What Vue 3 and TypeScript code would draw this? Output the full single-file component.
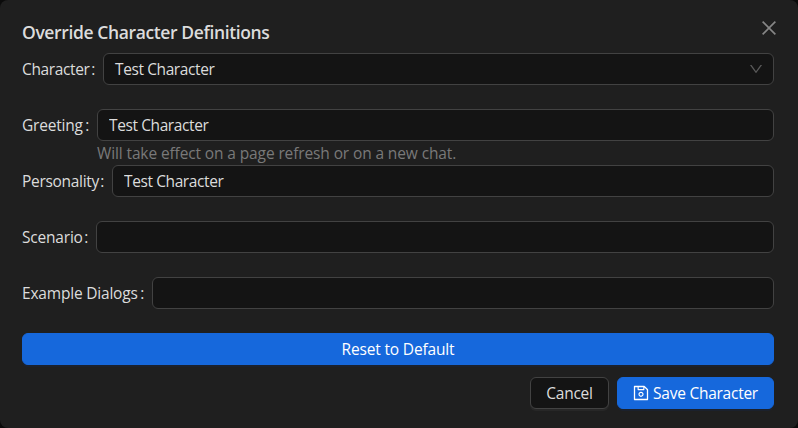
<script setup lang="ts">
import { reactive } from 'vue'

interface Field {
  key: string
  label: string
  value: string
  kind: 'select' | 'input'
  hint?: string
}

const fields = reactive<Field[]>([
  { key: 'character', label: 'Character', value: 'Test Character', kind: 'select' },
  { key: 'greeting', label: 'Greeting', value: 'Test Character', kind: 'input', hint: 'Will take effect on a page refresh or on a new chat.' },
  { key: 'personality', label: 'Personality', value: 'Test Character', kind: 'input' },
  { key: 'scenario', label: 'Scenario', value: '', kind: 'input' },
  { key: 'dialogs', label: 'Example Dialogs', value: '', kind: 'input' },
])

function reset() {
  for (const field of fields) {
    if (field.kind === 'input') field.value = ''
  }
}
</script>

<template>
  <div class="modal" role="dialog">
    <header class="header">
      <h1 class="title">Override Character Definitions</h1>
      <button class="close" type="button" aria-label="Close">
        <svg viewBox="64 64 896 896" width="18" height="18" fill="currentColor">
          <path d="M799.9 166.3 857.7 224.1 569.9 512 857.7 799.9 799.9 857.7 512 569.9 224.1 857.7 166.3 799.9 454.1 512 166.3 224.1 224.1 166.3 512 454.1z" />
        </svg>
      </button>
    </header>

    <form class="form" @submit.prevent>
      <div v-for="field in fields" :key="field.key" class="row" :class="field.key">
        <label class="label"><span class="name">{{ field.label }}</span><span class="colon">:</span></label>
        <div class="control">
          <div v-if="field.kind === 'select'" class="box">
            <span class="value">{{ field.value }}</span>
            <svg class="arrow" viewBox="64 64 896 896" width="14" height="14" fill="currentColor">
              <path d="M884 256h-75c-5.1 0-9.9 2.5-12.9 6.6L512 654.2 227.9 262.6c-3-4.1-7.8-6.6-12.9-6.6h-75c-6.5 0-10.3 7.4-6.5 12.7l352.6 486.1c12.8 17.6 39 17.6 51.7 0l352.6-486.1c3.9-5.3.1-12.7-6.4-12.7z" />
            </svg>
          </div>
          <input v-else v-model="field.value" class="box value" type="text" />
          <div v-if="field.hint" class="hint">{{ field.hint }}</div>
        </div>
      </div>
      <button class="btn primary reset" type="button" @click="reset"><span>Reset to Default</span></button>
    </form>

    <footer class="footer">
      <button class="btn cancel" type="button"><span>Cancel</span></button>
      <button class="btn primary save" type="button">
        <svg viewBox="64 64 896 896" width="16" height="16" fill="currentColor">
          <path d="M893.3 293.3L730.7 130.7c-7.5-7.5-16.7-13-26.7-16V112H144c-17.7 0-32 14.3-32 32v736c0 17.7 14.3 32 32 32h736c17.7 0 32-14.3 32-32V338.5c0-17-6.7-33.2-18.7-45.2zM384 184h256v104H384V184zm456 656H184V184h136v136c0 17.7 14.3 32 32 32h320c17.7 0 32-14.3 32-32V205.8l136 136V840zM512 442c-79.5 0-144 64.5-144 144s64.5 144 144 144 144-64.5 144-144-64.5-144-144-144zm0 224c-44.2 0-80-35.8-80-80s35.8-80 80-80 80 35.8 80 80-35.8 80-80 80z" />
        </svg>
        <span>Save Character</span>
      </button>
    </footer>
  </div>
</template>

<style>
body {
  background: #0b0b0b;
}
</style>

<style scoped>
.modal {
  box-sizing: border-box;
  width: 798px;
  height: 428px;
  padding: 20px 24px 19px 22px;
  border-radius: 8px;
  background: #1f1f1f;
  color: #dcdcdc;
  font-family: "Segoe UI", "Open Sans", "Noto Sans", sans-serif;
  font-size: 15.5px;
  line-height: 24px;
  letter-spacing: -0.3px;
  white-space: nowrap;
}

.header {
  display: flex;
  justify-content: space-between;
  height: 33px;
}

.title {
  margin: 0;
  font-size: 17.5px;
  font-weight: 600;
  line-height: 24px;
  letter-spacing: -0.38px;
}

.close {
  width: 18px;
  height: 18px;
  margin: -1px -4px 0 0;
  padding: 0;
  border: 0;
  background: none;
  color: #868686;
}

.close svg,
.btn svg,
.arrow {
  display: block;
  flex: none;
}

.form {
  display: flex;
  flex-direction: column;
}

.row {
  display: flex;
  height: 56px;
}

.label {
  display: flex;
  flex: none;
  justify-content: space-between;
  box-sizing: border-box;
  height: 32px;
  padding-right: 8px;
  line-height: 32px;
}

.character .label { width: 81px; letter-spacing: -0.36px; }
.greeting .label { width: 75px; letter-spacing: -0.2px; }
.personality .label { width: 90px; }
.scenario .label { width: 74px; letter-spacing: -0.2px; }
.dialogs .label { width: 130px; letter-spacing: -0.2px; }

.control {
  flex: 1;
  min-width: 0;
}

.box {
  display: flex;
  align-items: center;
  justify-content: space-between;
  box-sizing: border-box;
  width: 100%;
  height: 32px;
  padding: 0 11px;
  border: 1px solid #424242;
  border-radius: 6px;
  outline: 0;
  background: #141414;
  color: inherit;
  font: inherit;
  letter-spacing: -0.4px;
}

.arrow {
  margin-right: -1px;
  color: #5a5a5a;
}

.hint {
  color: #797979;
  letter-spacing: -0.12px;
}

.btn {
  display: flex;
  align-items: center;
  justify-content: center;
  box-sizing: border-box;
  height: 32px;
  padding: 0;
  border: 1px solid #424242;
  border-radius: 6px;
  background: #141414;
  box-shadow: 0 2px 0 rgba(255, 255, 255, 0.04);
  color: #dcdcdc;
  font: inherit;
  letter-spacing: -0.25px;
}

.primary {
  border-color: #1668dc;
  background: #1668dc;
  box-shadow: 0 2px 0 rgba(0, 60, 180, 0.1);
  color: #fff;
}

.reset {
  letter-spacing: -0.17px;
}

.footer {
  display: flex;
  justify-content: flex-end;
  gap: 8px;
  margin-top: 12px;
}

.cancel {
  width: 79px;
}

.save {
  gap: 4px;
  width: 157px;
}
</style>
